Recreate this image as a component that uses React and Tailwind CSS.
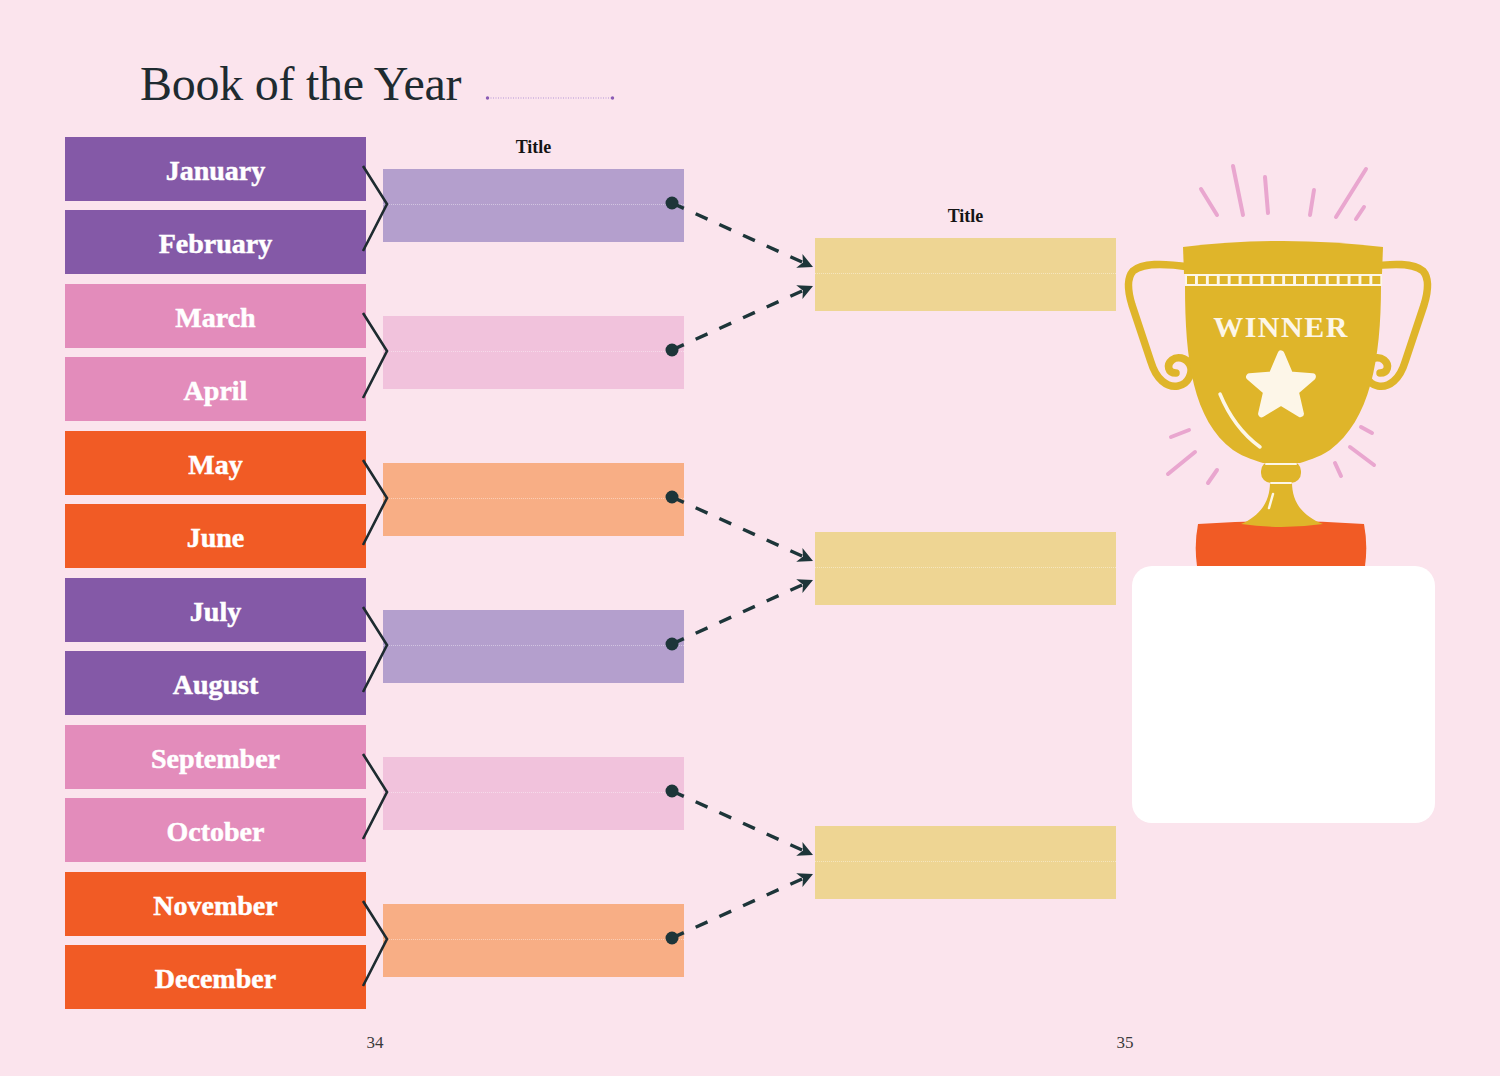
import React from "react";

const serif = "font-['Liberation_Serif','Times_New_Roman',serif]";

const pairs = [
  ["January", "February"],
  ["March", "April"],
  ["May", "June"],
  ["July", "August"],
  ["September", "October"],
  ["November", "December"],
];
const barColors = ["bg-[#8459a7]", "bg-[#e38cbb]", "bg-[#f15b25]", "bg-[#8459a7]", "bg-[#e38cbb]", "bg-[#f15b25]"];
const boxColors = ["bg-[#b49fcd]", "bg-[#f1c2dc]", "bg-[#f8ae85]", "bg-[#b49fcd]", "bg-[#f1c2dc]", "bg-[#f8ae85]"];
const rowStart1 = ["col-start-1 row-start-1", "col-start-1 row-start-2", "col-start-1 row-start-3", "col-start-1 row-start-4", "col-start-1 row-start-5", "col-start-1 row-start-6"];
const rowStart2 = ["col-start-2 row-start-1", "col-start-2 row-start-2", "col-start-2 row-start-3", "col-start-2 row-start-4", "col-start-2 row-start-5", "col-start-2 row-start-6"];
const rowStart3 = ["col-start-3 row-start-1", "col-start-3 row-start-2", "col-start-3 row-start-3", "col-start-3 row-start-4", "col-start-3 row-start-5", "col-start-3 row-start-6"];
const arrowCells = ["col-start-4 row-start-1 row-span-2", "col-start-4 row-start-3 row-span-2", "col-start-4 row-start-5 row-span-2"];
const yellowCells = ["col-start-5 row-start-1 row-span-2", "col-start-5 row-start-3 row-span-2", "col-start-5 row-start-5 row-span-2"];

const INK = "#1d3539";

function Arrow({ x1, y1, x2, y2 }) {
  const dx = x2 - x1;
  const dy = y2 - y1;
  const L = Math.hypot(dx, dy);
  const ux = dx / L;
  const uy = dy / L;
  const head = 15;
  const hw = 7.5;
  const bx = x2 - ux * head;
  const by = y2 - uy * head;
  const nx = x2 - ux * (head - 4);
  const ny = y2 - uy * (head - 4);
  const pts = `${x2},${y2} ${bx - uy * hw},${by + ux * hw} ${nx},${ny} ${bx + uy * hw},${by - ux * hw}`;
  return (
    <g>
      <line x1={x1} y1={y1} x2={bx + ux * 3} y2={by + uy * 3} stroke={INK} strokeWidth="3.4" strokeDasharray="13 13" />
      <circle cx={x1} cy={y1} r="6.5" fill={INK} />
      <polygon points={pts} fill={INK} />
    </g>
  );
}

function Box({ color, className = "" }) {
  return (
    <div className={`flex h-[73px] w-[301px] flex-col ${color} ${className}`}>
      <div className="h-[36px] border-b border-dotted border-white/40" />
    </div>
  );
}

function starPoints(cx, cy, R, r) {
  const pts = [];
  for (let i = 0; i < 10; i++) {
    const a = -Math.PI / 2 + (i * Math.PI) / 5;
    const rad = i % 2 === 0 ? R : r;
    pts.push(`${(cx + rad * Math.cos(a)).toFixed(1)},${(cy + rad * Math.sin(a)).toFixed(1)}`);
  }
  return pts.join(" ");
}

function Trophy() {
  const gold = "#dfb52a";
  const cream = "#fdf6e8";
  const pink = "#e9a6cf";
  const rays = [
    [1201, 189, 1217, 215],
    [1233, 166, 1243, 215],
    [1265, 177, 1268, 213],
    [1314, 190, 1310, 215],
    [1366, 169, 1336, 217],
    [1364, 207, 1356, 219],
    [1171, 437, 1189, 430],
    [1168, 474, 1195, 452],
    [1208, 483, 1217, 470],
    [1361, 427, 1372, 433],
    [1350, 447, 1374, 465],
    [1335, 463, 1341, 476],
  ];
  const handle =
    "M1190,267 C1162,263 1142,263 1133,271 C1126,279 1128,292 1132,305 L1151,362 C1156,379 1167,388 1178,386 C1189,384 1193,372 1190,365 C1186,357 1177,356 1172,360 C1166,365 1168,373 1176,373";
  const squares = [];
  for (let i = 0; i < 18; i++) {
    squares.push(<rect key={i} x={1187 + i * 10.9} y="276" width="8" height="8" fill={gold} />);
  }
  return (
    <svg width="324" height="429" viewBox="1116 137 324 429" className="block">
      {rays.map((r, i) => (
        <line key={i} x1={r[0]} y1={r[1]} x2={r[2]} y2={r[3]} stroke={pink} strokeWidth="4" strokeLinecap="round" />
      ))}
      <path d={handle} fill="none" stroke={gold} strokeWidth="7.5" strokeLinecap="round" />
      <g transform="matrix(-1 0 0 1 2556 0)">
        <path d={handle} fill="none" stroke={gold} strokeWidth="7.5" strokeLinecap="round" />
      </g>
      {/* base */}
      <path d="M1198,524 Q1281,518 1364,524 Q1368,545 1365,566 L1197,566 Q1194,545 1198,524 Z" fill="#f15b25" />
      {/* stem */}
      <path d="M1270,482 L1292,482 C1292,500 1300,515 1323,524 Q1281,530 1241,524 C1262,515 1270,500 1270,482 Z" fill={gold} />
      {/* neck ring */}
      <rect x="1261" y="461" width="40" height="22" rx="10" fill={gold} />
      <line x1="1266" y1="464" x2="1296" y2="464" stroke={cream} strokeWidth="2" strokeLinecap="round" />
      <line x1="1271" y1="483" x2="1291" y2="483" stroke={cream} strokeWidth="2" strokeLinecap="round" />
      {/* rim */}
      <path d="M1183,247 Q1283,235 1383,247 L1382,274 L1184,274 Z" fill={gold} />
      <rect x="1185" y="274" width="197" height="12" fill={cream} />
      {squares}
      {/* body */}
      <path
        d="M1185,286 L1381,286 C1381,360 1370,420 1330,450 C1318,458 1306,461 1300,463 L1263,463 C1257,461 1245,458 1233,450 C1193,420 1185,360 1185,286 Z"
        fill={gold}
      />
      <text
        x="1281"
        y="337"
        textAnchor="middle"
        fontFamily="'Liberation Serif', 'Times New Roman', serif"
        fontWeight="700"
        fontSize="30"
        letterSpacing="1.5"
        fill={cream}
      >
        WINNER
      </text>
      <polygon points={starPoints(1281, 387, 33, 15)} fill={cream} stroke={cream} strokeWidth="7" strokeLinejoin="round" />
      <path d="M1220,394 Q1234,428 1260,447" fill="none" stroke={cream} strokeWidth="3.5" strokeLinecap="round" />
      <line x1="1273" y1="494" x2="1269" y2="508" stroke={cream} strokeWidth="2.5" strokeLinecap="round" />
    </svg>
  );
}

export default function App() {
  return (
    <div className={`flex h-[1076px] w-[1500px] flex-col overflow-hidden bg-[#fbe4ed] ${serif}`}>
      {/* title row */}
      <div className="flex h-[137px] items-start pl-[140px] pt-[60px]">
        <h1 className="text-[48px] font-normal leading-none tracking-[-0.25px] text-[#1e2b30]">Book of the Year</h1>
        <svg width="130" height="6" className="ml-[24px] mt-[35px] block">
          <line x1="3" y1="3" x2="127" y2="3" stroke="#b393d6" strokeWidth="1" strokeDasharray="1 1.5" />
          <circle cx="2.5" cy="3" r="1.7" fill="#8a5bb5" />
          <circle cx="127.5" cy="3" r="1.7" fill="#8a5bb5" />
        </svg>
      </div>

      {/* bracket grid */}
      <div className="pl-[65px]">
        <div className="grid grid-cols-[301px_17px_301px_131px_301px_324px] grid-rows-[137px_137px_137px_137px_137px_137px] gap-y-[10px]">
          {pairs.map((pair, i) => (
            <React.Fragment key={i}>
              <div className={`flex flex-col gap-[9px] ${rowStart1[i]}`}>
                {pair.map((m) => (
                  <div
                    key={m}
                    className={`flex h-[64px] items-center justify-center pt-[3px] text-[28px] font-bold leading-none text-white [-webkit-text-stroke:0.5px_white] ${barColors[i]}`}
                  >
                    {m}
                  </div>
                ))}
              </div>
              <div className={`relative z-10 ${rowStart2[i]}`}>
                <svg width="17" height="137" className="block overflow-visible">
                  <polyline points="-3,29 21,67 -3,114" fill="none" stroke="#1e2b30" strokeWidth="2.6" />
                </svg>
              </div>
              <div className={`flex flex-col ${rowStart3[i]}`}>
                {i === 0 ? (
                  <>
                    <div className="h-[20px] text-center text-[18px] font-bold leading-[20px] text-[#141414]">Title</div>
                    <Box color={boxColors[i]} className="mt-[12px]" />
                  </>
                ) : (
                  <Box color={boxColors[i]} className="mt-[32px]" />
                )}
              </div>
            </React.Fragment>
          ))}

          {[0, 1, 2].map((g) => (
            <React.Fragment key={`g${g}`}>
              <div className={`relative z-20 ${arrowCells[g]}`}>
                <svg width="131" height="284" className="block overflow-visible">
                  <Arrow x1={-12} y1={66} x2={129} y2={130} />
                  <Arrow x1={-12} y1={213} x2={129} y2={149} />
                </svg>
              </div>
              <div className={`flex flex-col ${yellowCells[g]}`}>
                {g === 0 ? (
                  <>
                    <div className="mt-[69px] h-[20px] text-center text-[18px] font-bold leading-[20px] text-[#141414]">Title</div>
                    <Box color="bg-[#eed593]" className="mt-[12px]" />
                  </>
                ) : (
                  <Box color="bg-[#eed593]" className="mt-[101px]" />
                )}
              </div>
            </React.Fragment>
          ))}

          <div className="col-start-6 row-start-1 row-span-6 flex flex-col">
            <Trophy />
            <div className="ml-[16px] h-[257px] w-[303px] rounded-[20px] bg-white" />
          </div>
        </div>
      </div>

      {/* page numbers */}
      <div className="mt-[24px] flex text-[17px] leading-[20px] text-[#3a3a3a]">
        <div className="w-[750px] text-center">34</div>
        <div className="w-[750px] text-center">35</div>
      </div>
    </div>
  );
}
